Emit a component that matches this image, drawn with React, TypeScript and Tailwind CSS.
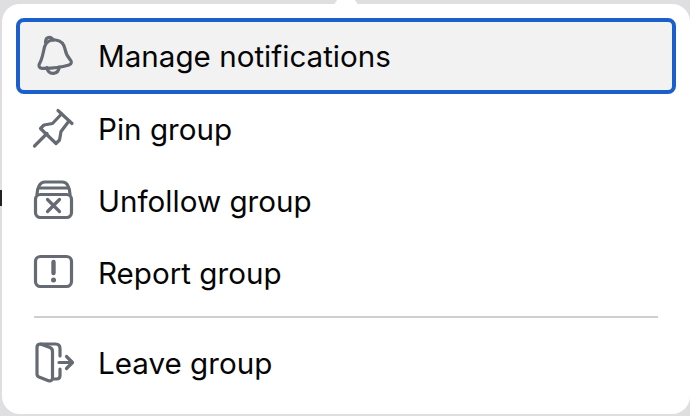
const rows = [
  { label: "Pin group", icon: <PinIcon /> },
  { label: "Unfollow group", icon: <UnfollowIcon /> },
  { label: "Report group", icon: <ReportIcon /> },
];

function Icon({ children }: { children: React.ReactNode }) {
  return (
    <svg
      width="44"
      height="44"
      viewBox="0 0 44 44"
      fill="none"
      stroke="#656a73"
      strokeWidth="3.2"
      strokeLinecap="round"
      strokeLinejoin="round"
      className="shrink-0"
    >
      {children}
    </svg>
  );
}

function BellIcon() {
  return (
    <Icon>
      <path d="M13.500 8c.2-3 1.800-4.700 3.800-4.700 1.800 0 3 1 3.700 2.700" />
      <path d="M12.500 13c1.500-5 6-7.500 11-7 5.300.6 8.500 4 9.500 9 1 5.300 2.700 8 5.300 10.800 1.700 2 1.200 4.500-1.300 5.200-7.500 2.200-18 3.500-27 3.300-2.800-.2-3.700-2.500-2.600-4.500 2.900-4.500 3.600-10.800 5.100-16.800z" />
      <path d="M14.800 33.500c.8 4 3.500 6 6.700 5.800 3-.2 5.300-2.400 5.700-6.300" />
    </Icon>
  );
}

function PinIcon() {
  return (
    <Icon>
      <path d="M2.500 38l12.500-12.500" />
      <path d="M26 2.500l14 13" />
      <path d="M29.500 6L20.500 15.500l-8.500 1.500-3.500 3.500L24 35.500l3.500-3.500 1.500-8.500L37 13" />
    </Icon>
  );
}

function UnfollowIcon() {
  return (
    <Icon>
      <rect x="3.500" y="14.500" width="36" height="23" rx="5" />
      <path d="M5 14.500c0-4 .5-6 2-8.500 1.200-2.500 3-4 6-4h17c3 0 5 1.500 6 4 1.500 2.500 2 4.500 2 8.500" />
      <path d="M7 8h29" />
      <path d="M15.500 19.500l12 12M27.500 19.500l-12 12" />
    </Icon>
  );
}

function ReportIcon() {
  return (
    <Icon>
      <rect x="3.500" y="4.500" width="36" height="30" rx="5" />
      <path d="M21.500 10v11" strokeWidth="4.400" />
      <path d="M21.500 28v.1" strokeWidth="5" />
    </Icon>
  );
}

function LeaveIcon() {
  return (
    <Icon>
      <path d="M9 2h14.500c3 0 4.500 1.500 4.500 4.500V14" />
      <path d="M28 27v6.500c0 2.500-1.200 3.500-3.500 3.500H22" />
      <path d="M8.500 2C6 2 5 3.500 5 5.500V32c0 1.700.7 2.600 2 3.100l9.500 3.600c2.300.8 4-.4 4-2.800V9.500c0-2-.8-3.300-2.500-4L8.500 2z" />
      <path d="M27 20.500h13M34.500 14.500l6 6-6 6" />
    </Icon>
  );
}

function Row({ icon, label }: { icon: React.ReactNode; label: string }) {
  return (
    <div className="flex h-[72px] items-center gap-[22px] pl-[16px]">
      {icon}
      <span className="mb-[2px]">{label}</span>
    </div>
  );
}

export default function App() {
  return (
    <div className="relative h-[416px] w-[690px] overflow-hidden bg-[#dfdfe1] pt-[4px] pl-[2px] font-['Inter',sans-serif] text-[29.6px] text-[#050505]">
      {/* caret above the menu */}
      <div className="absolute top-0 left-[332px] h-[8px] w-[28px] bg-white [clip-path:polygon(18%_0,82%_0,100%_100%,0_100%)]" />
      {/* bit of the page peeking out behind the menu */}
      <div className="absolute top-[190px] left-0 h-[16px] w-[2px] bg-[#222222]" />
      <div className="h-[410px] w-[688px] rounded-[18px] bg-white pt-[14px] pr-[14px] pl-[14px]">
        <div className="flex h-[76px] items-center gap-[22px] rounded-[8px] border-[4px] border-[#1a5fcc] bg-[#f2f2f2] pl-[12px]">
          <BellIcon />
          <span className="mt-[1px]">Manage notifications</span>
        </div>
        <div>
          {rows.map((row) => (
            <Row key={row.label} icon={row.icon} label={row.label} />
          ))}
        </div>
        <div className="mt-[6px] mr-[18px] ml-[18px] h-[2px] bg-[#cfcfd3]" />
        <div className="pt-[10px]">
          <Row icon={<LeaveIcon />} label="Leave group" />
        </div>
      </div>
    </div>
  );
}
